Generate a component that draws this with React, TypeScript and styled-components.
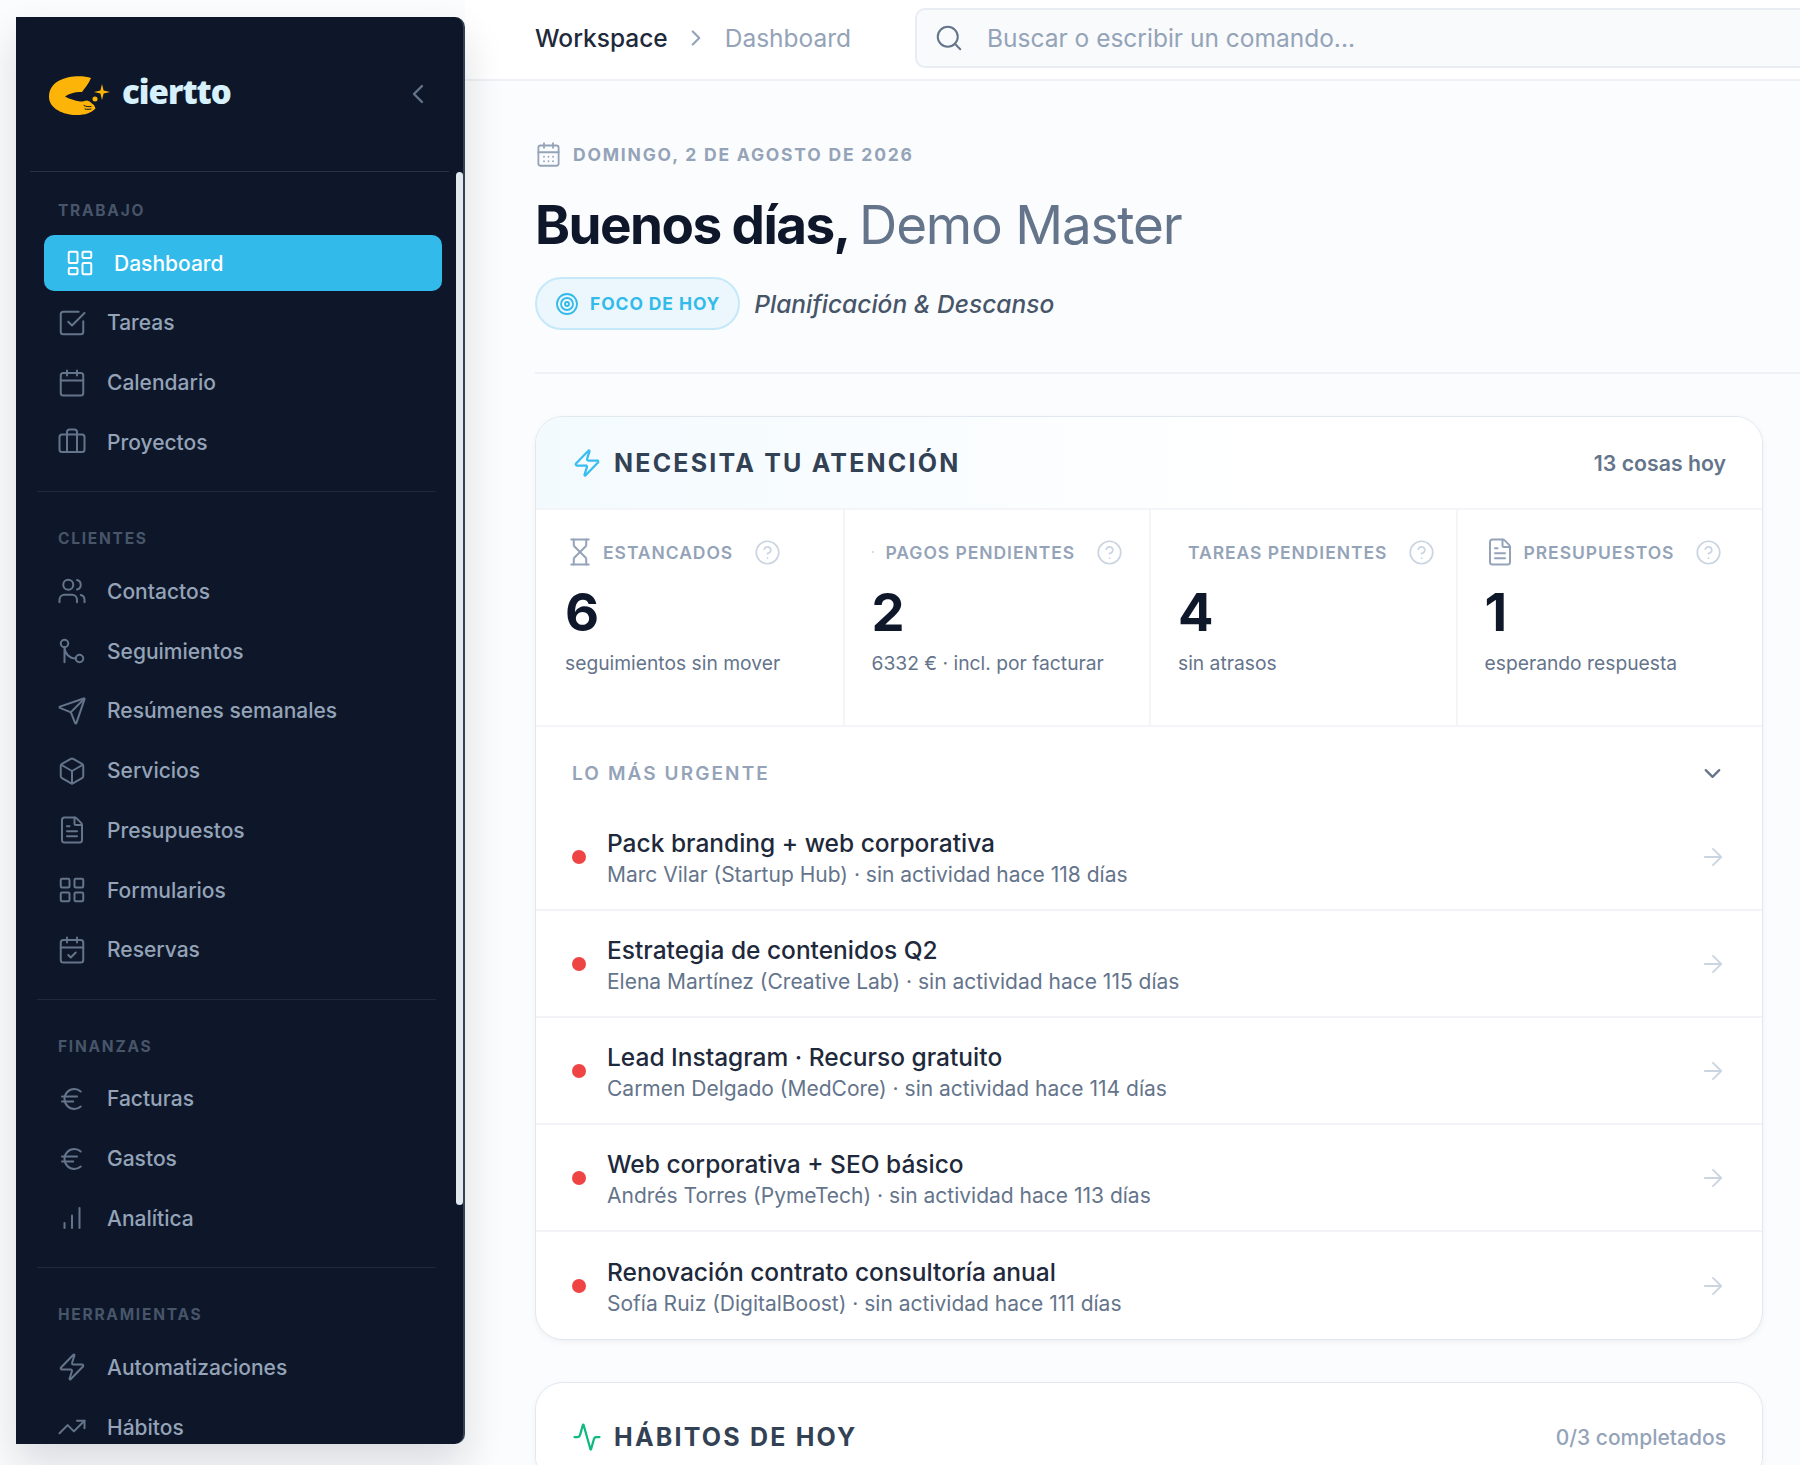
import React, { FC } from 'react';
import styled, { createGlobalStyle } from 'styled-components';
import {
  Activity,
  ArrowRight,
  Briefcase,
  CalendarCheck,
  Calendar,
  CalendarDays,
  ChevronDown,
  ChevronLeft,
  ChevronRight,
  CircleHelp,
  createLucideIcon,
  Euro,
  FileText,
  GitMerge,
  Hourglass,
  LayoutDashboard,
  LayoutGrid,
  LucideIcon,
  Box,
  Search,
  Send,
  SquareCheckBig,
  Target,
  TrendingUp,
  Users,
  Zap,
} from 'lucide-react';

const GlobalStyle = createGlobalStyle`
  html, body {
    margin: 0;
    padding: 0;
    background: #fbfcfd;
    font-family: 'Inter', 'Liberation Sans', sans-serif;
  }
  * {
    box-sizing: border-box;
  }
`;

// three rising bars, no axis
const RisingBars = createLucideIcon('RisingBars', [
  ['path', { d: 'M6 20v-4', key: 'a' }],
  ['path', { d: 'M12 20v-10', key: 'b' }],
  ['path', { d: 'M18 20V4', key: 'c' }],
]);

type NavEntry = { label: string; icon: LucideIcon; active?: boolean };
type NavGroup = { title: string; items: NavEntry[] };

const navGroups: NavGroup[] = [
  {
    title: 'TRABAJO',
    items: [
      { label: 'Dashboard', icon: LayoutDashboard, active: true },
      { label: 'Tareas', icon: SquareCheckBig },
      { label: 'Calendario', icon: Calendar },
      { label: 'Proyectos', icon: Briefcase },
    ],
  },
  {
    title: 'CLIENTES',
    items: [
      { label: 'Contactos', icon: Users },
      { label: 'Seguimientos', icon: GitMerge },
      { label: 'Resúmenes semanales', icon: Send },
      { label: 'Servicios', icon: Box },
      { label: 'Presupuestos', icon: FileText },
      { label: 'Formularios', icon: LayoutGrid },
      { label: 'Reservas', icon: CalendarCheck },
    ],
  },
  {
    title: 'FINANZAS',
    items: [
      { label: 'Facturas', icon: Euro },
      { label: 'Gastos', icon: Euro },
      { label: 'Analítica', icon: RisingBars },
    ],
  },
  {
    title: 'HERRAMIENTAS',
    items: [
      { label: 'Automatizaciones', icon: Zap },
      { label: 'Hábitos', icon: TrendingUp },
    ],
  },
];

type Stat = {
  label: string;
  value: string;
  note: string;
  icon?: LucideIcon;
  labelOffset: number;
  speck?: boolean;
};

const stats: Stat[] = [
  { label: 'ESTANCADOS', value: '6', note: 'seguimientos sin mover', icon: Hourglass, labelOffset: 8 },
  { label: 'PAGOS PENDIENTES', value: '2', note: '6332 € · incl. por facturar', labelOffset: 12, speck: true },
  { label: 'TAREAS PENDIENTES', value: '4', note: 'sin atrasos', labelOffset: 10 },
  { label: 'PRESUPUESTOS', value: '1', note: 'esperando respuesta', icon: FileText, labelOffset: 9 },
];

const urgentItems = [
  { title: 'Pack branding + web corporativa', meta: 'Marc Vilar (Startup Hub) · sin actividad hace 118 días' },
  { title: 'Estrategia de contenidos Q2', meta: 'Elena Martínez (Creative Lab) · sin actividad hace 115 días' },
  { title: 'Lead Instagram · Recurso gratuito', meta: 'Carmen Delgado (MedCore) · sin actividad hace 114 días' },
  { title: 'Web corporativa + SEO básico', meta: 'Andrés Torres (PymeTech) · sin actividad hace 113 días' },
  { title: 'Renovación contrato consultoría anual', meta: 'Sofía Ruiz (DigitalBoost) · sin actividad hace 111 días' },
];

const Logo: FC = () => (
  <svg width="62" height="44" viewBox="0 0 62 44" fill="none">
    <path
      d="M42 6C30 2 0 4 0 25c0 12 16 18.500 28 18 8 0 14-2 18.500-6.500L45 33c-2-1-4-4-7-4.500-2 0-4 1.500-7 1-5-1-11-2.500-15-5 5-3.500 11-5 17-4.500 3-4 7-9 9-14Z"
      fill="#fdb408"
    />
    <path d="M35 33.500c2 1 4 1.500 7 1M36 37c2 .5 4 .5 6 0" stroke="#0e1729" strokeWidth="1" strokeLinecap="round" />
    <circle cx="46" cy="27" r="2.500" fill="#fdb408" />
    <path d="M53 12l1.600 6.400L61 20l-6.400 1.600L53 28l-1.600-6.400L45 20l6.400-1.600Z" fill="#fdb408" />
  </svg>
);

const App: FC = () => {
  return (
    <>
      <GlobalStyle />
      <Shell>
        <Sidebar>
          <Brand>
            <BrandMark>
              <Logo />
              <BrandName>ciertto</BrandName>
            </BrandMark>
            <CollapseButton>
              <ChevronLeft size={32} strokeWidth={1.8} />
            </CollapseButton>
          </Brand>
          <BrandRule />
          <Nav>
            {navGroups.map((group, i) => (
              <NavSection key={group.title} $first={i === 0}>
                <SectionLabel>{group.title}</SectionLabel>
                <NavList>
                  {group.items.map((item) => (
                    <NavItem key={item.label} $active={item.active}>
                      <item.icon size={30} strokeWidth={1.6} />
                      <span>{item.label}</span>
                    </NavItem>
                  ))}
                </NavList>
              </NavSection>
            ))}
          </Nav>
          <ScrollThumb />
        </Sidebar>

        <Main>
          <TopBar>
            <Crumbs>
              <CrumbRoot>Workspace</CrumbRoot>
              <ChevronRight size={26} strokeWidth={2} color="#94a3b8" />
              <CrumbCurrent>Dashboard</CrumbCurrent>
            </Crumbs>
            <SearchBox>
              <Search size={30} strokeWidth={1.6} color="#64748b" />
              <SearchInput placeholder="Buscar o escribir un comando..." readOnly />
            </SearchBox>
          </TopBar>

          <Content>
            <Hero>
              <DateLine>
                <CalendarDays size={27} strokeWidth={1.6} color="#94a3b8" />
                <span>DOMINGO, 2 DE AGOSTO DE 2026</span>
              </DateLine>
              <Greeting>
                Buenos días, <GreetingName>Demo Master</GreetingName>
              </Greeting>
              <FocusRow>
                <FocusPill>
                  <Target size={24} strokeWidth={1.8} />
                  <span>FOCO DE HOY</span>
                </FocusPill>
                <FocusText>Planificación &amp; Descanso</FocusText>
              </FocusRow>
            </Hero>

            <Card>
              <CardHeader $tinted>
                <CardTitle>
                  <Zap size={30} strokeWidth={1.8} color="#38bdf0" />
                  <span>NECESITA TU ATENCIÓN</span>
                </CardTitle>
                <CardCount>13 cosas hoy</CardCount>
              </CardHeader>

              <StatsGrid>
                {stats.map((stat) => (
                  <StatCell key={stat.label}>
                    <StatLabelRow>
                      {stat.icon && <stat.icon size={30} strokeWidth={1.6} color="#94a3b8" />}
                      {stat.speck && <Speck />}
                      <StatLabel $offset={stat.labelOffset}>{stat.label}</StatLabel>
                      <CircleHelp size={27} strokeWidth={1.5} color="#cbd5e1" />
                    </StatLabelRow>
                    <StatValue>{stat.value}</StatValue>
                    <StatNote>{stat.note}</StatNote>
                  </StatCell>
                ))}
              </StatsGrid>

              <UrgentHead>
                <UrgentTitle>LO MÁS URGENTE</UrgentTitle>
                <ChevronDown size={27} strokeWidth={2} color="#64748b" />
              </UrgentHead>

              {urgentItems.map((item) => (
                <UrgentRow key={item.title}>
                  <RedDot />
                  <UrgentBody>
                    <UrgentName>{item.title}</UrgentName>
                    <UrgentMeta>{item.meta}</UrgentMeta>
                  </UrgentBody>
                  <ArrowRight size={28} strokeWidth={1.6} color="#cbd5e1" />
                </UrgentRow>
              ))}
            </Card>

            <HabitsCard>
              <CardHeader>
                <CardTitle>
                  <Activity size={30} strokeWidth={1.8} color="#10b981" />
                  <span>HÁBITOS DE HOY</span>
                </CardTitle>
                <HabitsCount>0/3 completados</HabitsCount>
              </CardHeader>
            </HabitsCard>
          </Content>
        </Main>
      </Shell>
    </>
  );
};

export default App;

const Shell = styled.div`
  display: flex;
  align-items: flex-start;
  width: 1800px;
  height: 1465px;
  overflow: hidden;
  background: #fbfcfd;
`;

const Sidebar = styled.aside`
  position: relative;
  display: flex;
  flex-direction: column;
  flex: 0 0 449px;
  height: 1427px;
  margin: 17px 0 0 16px;
  background: #0e1729;
  border-right: 2px solid #334155;
  border-radius: 0 10px 10px 0;
  box-shadow: 0 20px 40px rgba(15, 23, 42, 0.14);
  overflow: hidden;
`;

const Brand = styled.div`
  display: flex;
  align-items: center;
  justify-content: space-between;
  flex: 0 0 154px;
  padding: 0 29px 0 33px;
`;

const BrandMark = styled.div`
  display: flex;
  align-items: center;
  gap: 11px;
`;

const BrandName = styled.span`
  margin-bottom: 4px;
  font-family: 'Open Sans', sans-serif;
  font-weight: 800;
  font-size: 33px;
  line-height: 40px;
  letter-spacing: -1px;
  color: #d6f0fc;
`;

const CollapseButton = styled.div`
  display: flex;
  color: #64748b;
`;

const BrandRule = styled.div`
  height: 1px;
  margin: 0 14px;
  background: #2a3342;
`;

const Nav = styled.nav`
  flex: 1;
  padding: 29px 21px 0 28px;
  overflow: hidden;
`;

const NavSection = styled.section<{ $first?: boolean }>`
  ${(p) =>
    !p.$first &&
    `
    margin-top: 21px;
    padding-top: 37px;
    border-top: 1px solid #1e293b;
    margin-left: -7px;
    margin-right: 6px;
    padding-left: 7px;
  `}
`;

const SectionLabel = styled.div`
  padding-left: 14px;
  margin-bottom: 14px;
  font-size: 15.500px;
  line-height: 20px;
  font-weight: 700;
  letter-spacing: 1.75px;
  color: #475569;
`;

const NavList = styled.div`
  display: flex;
  flex-direction: column;
  gap: 3.750px;
`;

const NavItem = styled.div<{ $active?: boolean }>`
  display: flex;
  align-items: center;
  gap: ${(p) => (p.$active ? '19px' : '20px')};
  height: 56px;
  padding-left: ${(p) => (p.$active ? '21px' : '13px')};
  border-radius: 10px;
  background: ${(p) => (p.$active ? '#32bbea' : 'transparent')};
  color: ${(p) => (p.$active ? '#ffffff' : '#94a3b8')};
  font-size: 21px;
  font-weight: 500;

  svg {
    flex: none;
    color: ${(p) => (p.$active ? '#ffffff' : '#64748b')};
  }
`;

const ScrollThumb = styled.div`
  position: absolute;
  top: 155px;
  right: 0;
  width: 7px;
  height: 1033px;
  border-radius: 4px;
  background: #e2e8f0;
`;

const Main = styled.main`
  flex: 1;
  min-width: 0;
  display: flex;
  flex-direction: column;
`;

const TopBar = styled.header`
  display: flex;
  align-items: center;
  height: 81px;
  padding: 0 0 4px 70px;
  background: #ffffff;
  border-bottom: 2px solid #eef1f5;
`;

const Crumbs = styled.div`
  display: flex;
  align-items: center;
  gap: 15.500px;
  flex: 0 0 380px;
  font-size: 24.500px;
  line-height: 30px;
`;

const CrumbRoot = styled.span`
  font-weight: 500;
  color: #1e293b;
`;

const CrumbCurrent = styled.span`
  color: #94a3b8;
`;

const SearchBox = styled.div`
  display: flex;
  align-items: center;
  gap: 21px;
  flex: 1;
  height: 60px;
  margin-right: -24px;
  padding-left: 17px;
  background: #f8fafc;
  border: 2px solid #e8edf3;
  border-radius: 10px;
`;

const SearchInput = styled.input`
  flex: 1;
  border: none;
  outline: none;
  background: transparent;
  font-family: inherit;
  font-size: 24.500px;
  color: #94a3b8;

  &::placeholder {
    color: #94a3b8;
    opacity: 1;
  }
`;

const Content = styled.div`
  padding: 60px 37px 0 70px;
`;

const Hero = styled.div`
  margin-right: -37px;
  padding-bottom: 42px;
  border-bottom: 2px solid #eef1f5;
`;

const DateLine = styled.div`
  display: flex;
  align-items: center;
  gap: 11px;
  height: 26px;
  font-size: 17.500px;
  font-weight: 700;
  letter-spacing: 1.8px;
  color: #94a3b8;
`;

const Greeting = styled.h1`
  margin: 26px 0 0;
  font-size: 53px;
  line-height: 64px;
  font-weight: 700;
  letter-spacing: -1.55px;
  color: #0f172a;
`;

const GreetingName = styled.span`
  font-weight: 400;
  letter-spacing: -1.2px;
  color: #64748b;
`;

const FocusRow = styled.div`
  display: flex;
  align-items: center;
  gap: 14px;
  margin-top: 20px;
`;

const FocusPill = styled.div`
  display: flex;
  align-items: center;
  gap: 11px;
  height: 53px;
  padding: 0 18px;
  background: #ecf7fd;
  border: 2px solid #c5e9f9;
  border-radius: 27px;
  font-size: 17.500px;
  font-weight: 700;
  letter-spacing: 0.9px;
  color: #32bbea;
`;

const FocusText = styled.span`
  font-size: 24.500px;
  font-weight: 500;
  font-style: italic;
  color: #475569;
`;

const Card = styled.section`
  margin-top: 42px;
  background: #ffffff;
  border: 1px solid #e2e8f0;
  border-radius: 28px;
  box-shadow: 0 2px 6px rgba(15, 23, 42, 0.05);
  overflow: hidden;
`;

const HabitsCard = styled(Card)`
  margin-top: 42px;
  padding-top: 8px;
`;

const CardHeader = styled.div<{ $tinted?: boolean }>`
  display: flex;
  align-items: center;
  justify-content: space-between;
  height: ${(p) => (p.$tinted ? '93px' : '92px')};
  padding: 0 36px;
  border-bottom: ${(p) => (p.$tinted ? '2px solid #f3f5f8' : 'none')};
  background: ${(p) => (p.$tinted ? 'linear-gradient(90deg, #f3fafe 0%, #ffffff 60%)' : '#ffffff')};
`;

const CardTitle = styled.div`
  display: flex;
  align-items: center;
  gap: 12px;
  font-size: 25px;
  font-weight: 700;
  letter-spacing: 2.2px;
  color: #334155;
`;

const CardCount = styled.span`
  font-size: 21.250px;
  font-weight: 600;
  color: #64748b;
`;

const HabitsCount = styled.span`
  font-size: 21px;
  font-weight: 500;
  color: #94a3b8;
`;

const StatsGrid = styled.div`
  display: grid;
  grid-template-columns: repeat(4, 1fr);
  border-bottom: 2px solid #f3f5f8;
`;

const StatCell = styled.div`
  height: 215px;
  padding: 27px 12px 0 27px;
  border-left: 2px solid #f3f5f8;

  &:first-child {
    border-left-color: transparent;
  }
`;

const StatLabelRow = styled.div`
  display: flex;
  align-items: center;
  height: 30px;
  color: #94a3b8;
`;

const Speck = styled.i`
  width: 2px;
  height: 2px;
  background: #cbd5e1;
  border-radius: 50%;
`;

const StatLabel = styled.span<{ $offset: number }>`
  margin: 0 20.500px 0 ${(p) => p.$offset}px;
  font-size: 17.500px;
  font-weight: 600;
  letter-spacing: 0.95px;
  color: #94a3b8;
`;

const StatValue = styled.div`
  margin-top: 14px;
  font-size: 52.500px;
  line-height: 62px;
  font-weight: 700;
  color: #0f172a;
`;

const StatNote = styled.div`
  margin-top: 6px;
  font-size: 19.250px;
  line-height: 28px;
  color: #64748b;
`;

const UrgentHead = styled.div`
  display: flex;
  align-items: center;
  justify-content: space-between;
  height: 77px;
  padding: 15px 36px 0;
`;

const UrgentTitle = styled.span`
  font-size: 19px;
  font-weight: 600;
  letter-spacing: 2.1px;
  color: #94a3b8;
`;

const UrgentRow = styled.div`
  display: flex;
  align-items: center;
  height: 107px;
  padding: 0 35px 0 36px;
  border-bottom: 2px solid #f1f3f7;

  &:last-child {
    border-bottom: none;
  }
`;

const RedDot = styled.span`
  flex: none;
  width: 14px;
  height: 14px;
  border-radius: 50%;
  background: #ef4444;
`;

const UrgentBody = styled.div`
  flex: 1;
  min-width: 0;
  margin-left: 21px;
  padding-top: 4px;
`;

const UrgentName = styled.div`
  font-size: 24.500px;
  line-height: 32px;
  font-weight: 500;
  color: #1e293b;
`;

const UrgentMeta = styled.div`
  font-size: 21px;
  line-height: 31px;
  color: #64748b;
`;
